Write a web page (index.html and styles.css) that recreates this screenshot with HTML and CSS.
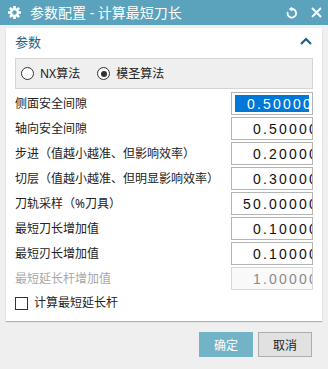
FILE: index.html
```html
<!DOCTYPE html>
<html>
<head>
  <title>参数配置 - 计算最短刀长</title>
  <link rel="stylesheet" href="styles.css">
</head>
<body>
  <div class="window">
    <div class="titlebar">
      <svg class="gear" width="13" height="13" viewBox="0 0 13 13">
        <g fill="#fff">
          <circle cx="6.5" cy="6.5" r="4.6"/>
          <rect x="5.2" y="0" width="2.6" height="13"/>
          <rect x="0" y="5.2" width="13" height="2.6"/>
          <rect x="5.2" y="0" width="2.6" height="13" transform="rotate(45 6.5 6.5)"/>
          <rect x="5.2" y="0" width="2.6" height="13" transform="rotate(-45 6.5 6.5)"/>
        </g>
        <circle cx="6.5" cy="6.5" r="2.2" fill="#5ba3bc"/>
      </svg>
      <span class="title">参数配置 - 计算最短刀长</span>
      <svg class="reset" width="12" height="12" viewBox="0 0 12 12">
        <path d="M5.5 2 A4.3 4.3 0 1 1 1.7 5" fill="none" stroke="#fff" stroke-width="1.8"/>
        <polygon points="6.2,-0.4 6.2,4.4 2.8,2" fill="#fff"/>
      </svg>
      <svg class="close" width="11" height="11" viewBox="0 0 11 11">
        <path d="M1 1 L10 10 M10 1 L1 10" stroke="#fff" stroke-width="1.9"/>
      </svg>
    </div>

    <div class="panel">
      <div class="section-head">
        <span>参数</span>
        <svg width="12" height="8" viewBox="0 0 12 8">
          <polyline points="1,7 6,2 11,7" fill="none" stroke="#1d6384" stroke-width="2.2"/>
        </svg>
      </div>

      <div class="radio-box">
        <label class="radio"><span class="dot"></span>NX算法</label>
        <label class="radio checked"><span class="dot"></span>模圣算法</label>
      </div>

      <div class="row">
        <span class="label">侧面安全间隙</span>
        <div class="field focused"><span class="val">0.50000</span></div>
      </div>
      <div class="row">
        <span class="label">轴向安全间隙</span>
        <div class="field"><span class="val">0.50000</span></div>
      </div>
      <div class="row">
        <span class="label">步进（值越小越准、但影响效率）</span>
        <div class="field"><span class="val">0.20000</span></div>
      </div>
      <div class="row">
        <span class="label">切层（值越小越准、但明显影响效率）</span>
        <div class="field"><span class="val">0.30000</span></div>
      </div>
      <div class="row">
        <span class="label">刀轨采样（%刀具）</span>
        <div class="field"><span class="val">50.00000</span></div>
      </div>
      <div class="row">
        <span class="label">最短刀长增加值</span>
        <div class="field"><span class="val">0.10000</span></div>
      </div>
      <div class="row">
        <span class="label">最短刃长增加值</span>
        <div class="field"><span class="val">0.10000</span></div>
      </div>
      <div class="row disabled">
        <span class="label">最短延长杆增加值</span>
        <div class="field"><span class="val">1.00000</span></div>
      </div>

      <label class="check"><span class="box"></span>计算最短延长杆</label>
    </div>

    <div class="footer">
      <button class="btn primary">确定</button>
      <button class="btn">取消</button>
    </div>
  </div>
</body>
</html>
```

FILE: styles.css
```css
body {
  margin: 0;
  font-family: "Noto Sans", "Noto Sans CJK SC", sans-serif;
  font-size: 12px;
  color: #222222;
  background-color: #efefef;
}

.window {
  width: 328px;
  height: 369px;
  background-color: #efefef;
  overflow: hidden;
}

.titlebar {
  display: flex;
  align-items: center;
  height: 25px;
  background-color: #5ba3bc;
  color: #ffffff;
  padding: 0 6px 0 8px;
}

.gear {
  margin-right: 9px;
}

.title {
  flex: 1;
  font-size: 14px;
  line-height: 25px;
}

.reset {
  margin-right: 13px;
}

.panel {
  margin: 3px 6px 0 6px;
  padding: 0 9px 7px 9px;
  background-color: #ffffff;
  box-shadow: 0 1px 1px rgba(0, 0, 0, 0.25);
}

.section-head {
  display: flex;
  align-items: center;
  justify-content: space-between;
  height: 26px;
  margin-bottom: 4px;
  font-size: 13px;
  color: #1d6384;
  padding-right: 1px;
}

.radio-box {
  display: flex;
  align-items: center;
  height: 29px;
  padding-left: 5px;
  background-color: #efefef;
  border: 1px solid #d4d4d4;
  margin-bottom: 3px;
}

.radio {
  display: flex;
  align-items: center;
  margin-right: 17px;
  font-size: 12px;
  line-height: 16px;
}

.dot {
  width: 11px;
  height: 11px;
  border: 1px solid #333333;
  border-radius: 50%;
  background-color: #ffffff;
  margin-right: 6px;
  position: relative;
}

.radio.checked .dot::after {
  content: "";
  position: absolute;
  left: 2.5px;
  top: 2.5px;
  width: 6px;
  height: 6px;
  border-radius: 50%;
  background-color: #333333;
}

.row {
  display: flex;
  align-items: center;
  justify-content: space-between;
  height: 23px;
  margin-bottom: 2px;
}

.label {
  line-height: 16px;
  white-space: nowrap;
}

/* value boxes: text is right aligned, the last digit runs past the edge */
.field {
  display: flex;
  justify-content: flex-end;
  align-items: center;
  box-sizing: border-box;
  width: 82px;
  height: 23px;
  border: 1px solid #b4b4b4;
  background-color: #ffffff;
  overflow: hidden;
}

.val {
  flex-shrink: 0;
  margin-right: -7px;
  font-family: "Liberation Sans", Arial, sans-serif;
  font-size: 14px;
  letter-spacing: 2.2px;
  line-height: 18px;
  color: #111111;
}

.field.focused {
  padding: 2px 3px;
  background: linear-gradient(to right, #e6892e 0, #e6892e 2px, #0078d7 2px);
  background-clip: content-box;
}

.field.focused .val {
  color: #ffffff;
  margin-right: -4px;
}

.row.disabled .label {
  color: #a8a8a8;
}

.row.disabled .field {
  border-color: #d6d6d6;
  background-color: #f9f9f9;
}

.row.disabled .val {
  color: #8a8a8a;
}

.check {
  display: flex;
  align-items: center;
  height: 22px;
  margin-top: 2px;
  line-height: 16px;
}

.box {
  width: 11px;
  height: 11px;
  border: 1px solid #333333;
  background-color: #ffffff;
  margin-right: 6px;
}

.footer {
  display: flex;
  justify-content: flex-end;
  gap: 5px;
  padding: 11px 16px 0 0;
}

.btn {
  width: 54px;
  height: 25px;
  border: 1px solid #adadad;
  background-color: #e1e1e1;
  color: #222222;
  font-family: "Noto Sans CJK SC", sans-serif;
  font-size: 12px;
  padding: 0;
}

.btn.primary {
  border-color: #72b3c8;
  background-color: #72b3c8;
  color: #ffffff;
}
```
